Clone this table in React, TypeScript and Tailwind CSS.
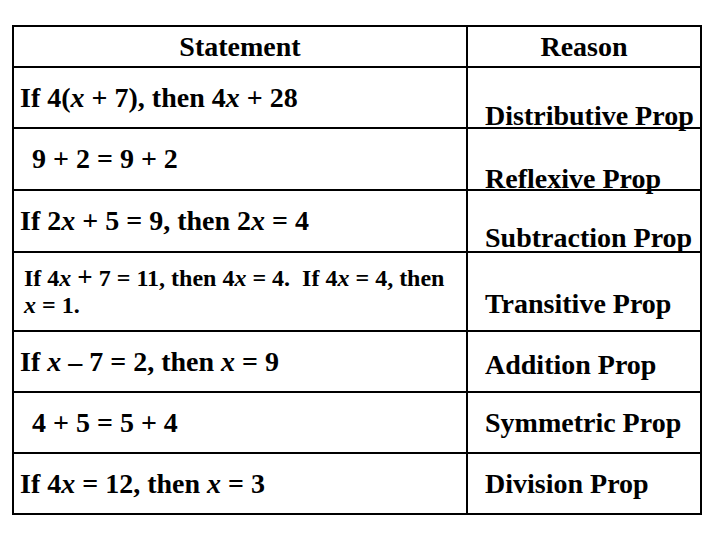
import React from "react";

type RowProps = {
  h: string;
  top?: boolean;
  left: React.ReactNode;
  right: React.ReactNode;
  leftClass: string;
  rightClass: string;
};

function Row({ h, top, left, right, leftClass, rightClass }: RowProps) {
  return (
    <div className={`flex ${top ? "border-t-2 border-black" : ""} ${h}`}>
      <div className={`w-[452px] flex ${leftClass}`}>{left}</div>
      <div className={`flex-1 border-l-2 border-black flex ${rightClass}`}>{right}</div>
    </div>
  );
}

const X = () => <i>x</i>;

export default function App() {
  return (
    <div className="w-[720px] h-[540px] bg-white pt-[25px] pl-[12px] font-['Liberation_Serif','Times_New_Roman',serif] font-bold text-black text-[28px] leading-none">
      <div className="w-[690px] border-2 border-black flex flex-col">
        <Row
          h="h-[39px]"
          leftClass="items-center justify-center"
          rightClass="items-center justify-center"
          left={<span>Statement</span>}
          right={<span>Reason</span>}
        />
        <Row
          top
          h="h-[61px]"
          leftClass="items-center pl-[6px]"
          rightClass="items-start pl-[17px] pt-[34px]"
          left={
            <span>
              If 4(<X /> + 7), then 4<X /> + 28
            </span>
          }
          right={<span className="whitespace-nowrap">Distributive Prop</span>}
        />
        <Row
          top
          h="h-[62px]"
          leftClass="items-center pl-[18px]"
          rightClass="items-start pl-[17px] pt-[36px]"
          left={<span>9 + 2 = 9 + 2</span>}
          right={<span className="whitespace-nowrap">Reflexive Prop</span>}
        />
        <Row
          top
          h="h-[62px]"
          leftClass="items-center pl-[6px]"
          rightClass="items-start pl-[17px] pt-[33px]"
          left={
            <span>
              If 2<X /> + 5 = 9, then 2<X /> = 4
            </span>
          }
          right={<span className="whitespace-nowrap">Subtraction Prop</span>}
        />
        <Row
          top
          h="h-[79px]"
          leftClass="items-start pl-[10px] pt-[11px]"
          rightClass="items-start pl-[17px] pt-[37px]"
          left={
            <p className="text-[24px] leading-[27px] whitespace-nowrap">
              If 4<X /> <span className="text-[27px] leading-none">+</span> 7 = 11, then 4<X /> = 4.&nbsp; If 4<X /> = 4, then
              <br />
              <X /> = 1.
            </p>
          }
          right={<span className="whitespace-nowrap">Transitive Prop</span>}
        />
        <Row
          top
          h="h-[61px]"
          leftClass="items-center pl-[6px]"
          rightClass="items-center pl-[17px] pt-[6px]"
          left={
            <span>
              If <X /> – 7 = 2, then <X /> = 9
            </span>
          }
          right={<span className="whitespace-nowrap">Addition Prop</span>}
        />
        <Row
          top
          h="h-[61px]"
          leftClass="items-center pl-[18px]"
          rightClass="items-center pl-[17px]"
          left={<span>4 + 5 = 5 + 4</span>}
          right={<span className="whitespace-nowrap">Symmetric Prop</span>}
        />
        <Row
          top
          h="h-[61px]"
          leftClass="items-center pl-[6px]"
          rightClass="items-center pl-[17px]"
          left={
            <span>
              If 4<X /> = 12, then <X /> = 3
            </span>
          }
          right={<span className="whitespace-nowrap">Division Prop</span>}
        />
      </div>
    </div>
  );
}
